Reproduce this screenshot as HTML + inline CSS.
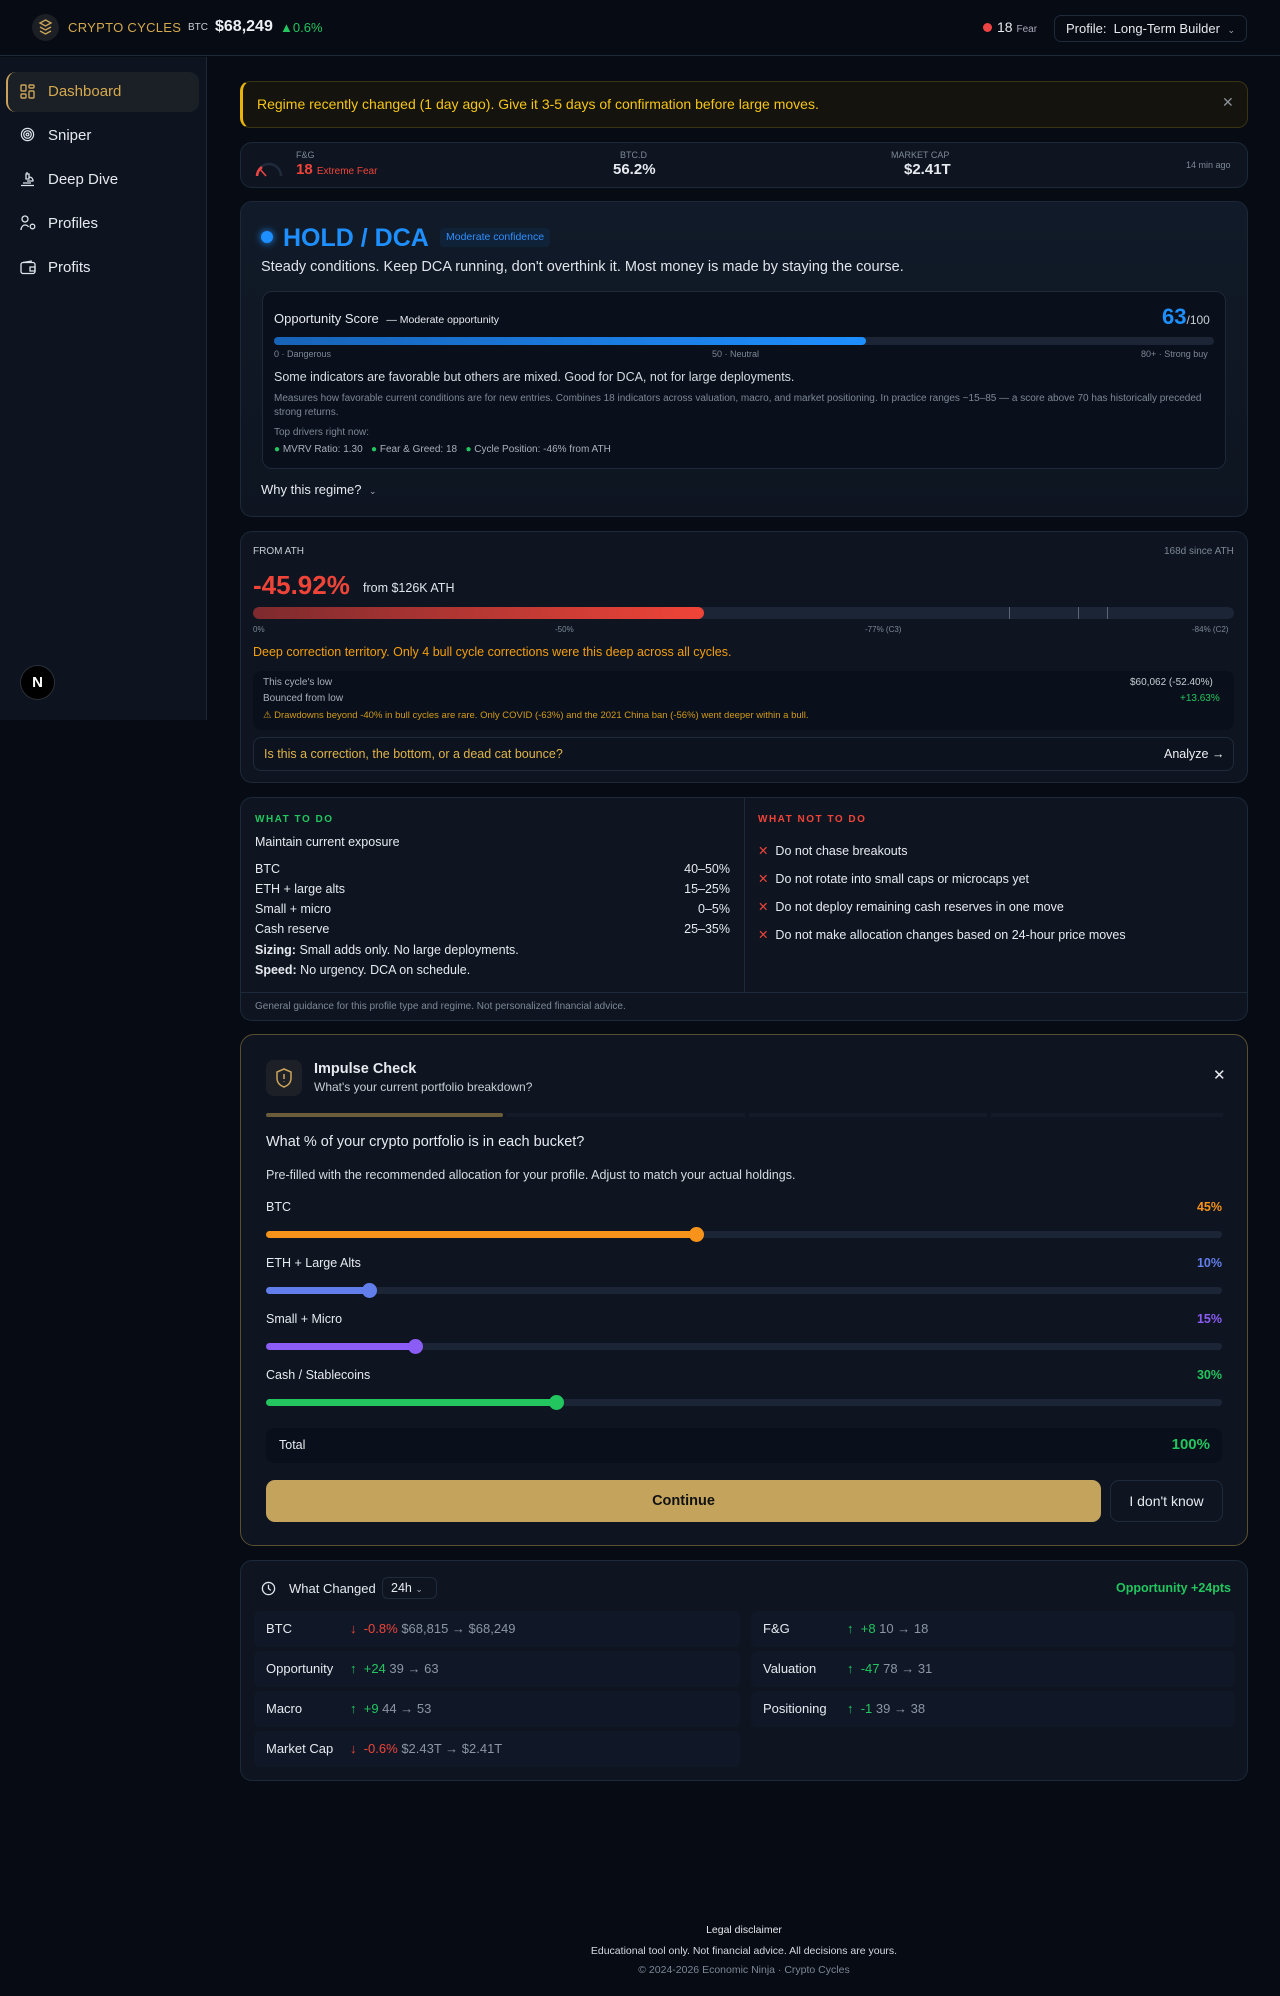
<!DOCTYPE html>
<html><head><meta charset="utf-8"><style>
*{box-sizing:border-box;margin:0;padding:0}
body{width:1280px;height:1996px;background:#060b14;font-family:"Liberation Sans",sans-serif;color:#e6e9ee;position:relative;overflow:hidden;font-size:14px}
.abs{position:absolute}
.card{position:absolute;left:240px;width:1008px;background:#0e1521;border:1px solid #1d2838;border-radius:12px}
.muted{color:#7d8796}
.green{color:#22c55e}
.red{color:#f04438}
.slider{position:absolute;left:26px;width:956px;height:7px;border-radius:4px;background:#1b2535}
.slider i{position:absolute;left:0;top:0;height:7px;border-radius:4px}
.slider b{position:absolute;top:-4px;width:15px;height:15px;border-radius:50%;margin-left:-7px}
.row{position:absolute;height:36px;background:#101828;border-radius:6px;font-size:13px;line-height:36px}
.row span{position:absolute}
</style></head><body>
<!-- header -->
<div class="abs" style="left:0;top:0;width:1280px;height:56px;border-bottom:1px solid #1d2838;background:#060b14"></div>
<div class="abs" style="left:32px;top:14px;width:27px;height:27px;border-radius:50%;background:#1c1f24"></div>
<svg class="abs" style="left:38px;top:19px" width="15" height="17" viewBox="0 0 15 17" fill="none" stroke="#c9a45a" stroke-width="1.4"><path d="M7.5 1 L13 4 L7.5 7 L2 4Z M2 8 L7.5 11 L13 8 M2 12 L7.5 15 L13 12"/></svg>
<div class="abs" style="left:68px;top:20px;font-size:13px;color:#d4a94e;letter-spacing:.3px">CRYPTO CYCLES</div>
<div class="abs" style="left:188px;top:22px;font-size:10px;color:#c8ccd3">BTC</div>
<div class="abs" style="left:215px;top:18px;font-size:16px;color:#eef0f3;font-weight:bold">$68,249</div>
<div class="abs" style="left:280px;top:20px;font-size:13px;color:#22c55e">▲0.6%</div>
<div class="abs" style="left:983px;top:23px;width:9px;height:9px;border-radius:50%;background:#ef4444"></div>
<div class="abs" style="left:997px;top:19px;font-size:14px">18 <span style="font-size:10px;color:#aab">Fear</span></div>
<div class="abs" style="left:1054px;top:15px;width:193px;height:27px;border:1px solid #1f2a3a;border-radius:7px;font-size:13px;line-height:25px;padding-left:11px">Profile:&nbsp; Long-Term Builder <span style="font-size:9px;color:#aab;margin-left:4px">⌄</span></div>
<!-- sidebar -->
<div class="abs" style="left:0;top:57px;width:207px;height:663px;background:#0d1420;border-right:1px solid #1d2838"></div>
<div class="abs" style="left:6px;top:72px;width:193px;height:40px;background:#1b1f26;border-radius:10px;border-left:2px solid #c9a45a"></div>
<svg class="abs" style="left:20px;top:84px" width="15" height="15" viewBox="0 0 15 15" fill="none" stroke="#c9a45a" stroke-width="1.4"><rect x="1" y="1" width="5" height="6" rx="1"/><rect x="9" y="1" width="5" height="3" rx="1"/><rect x="9" y="7" width="5" height="7" rx="1"/><rect x="1" y="10" width="5" height="4" rx="1"/></svg>
<div class="abs" style="left:48px;top:83px;font-size:15px;color:#d4a94e">Dashboard</div>
<svg class="abs" style="left:20px;top:127px" width="15" height="15" viewBox="0 0 16 16" fill="none" stroke="#dfe3ea" stroke-width="1.3"><circle cx="8" cy="8" r="6.5"/><circle cx="8" cy="8" r="4"/><circle cx="8" cy="8" r="1.5"/></svg>
<div class="abs" style="left:48px;top:127px;font-size:15px">Sniper</div>
<svg class="abs" style="left:20px;top:171px" width="15" height="16" viewBox="0 0 15 16" fill="none" stroke="#dfe3ea" stroke-width="1.3"><path d="M1 14.5h13M3 12h8M6 3h3v5H6zM7 1v2M9 6c3 0 4 2 4 4H7"/></svg>
<div class="abs" style="left:48px;top:171px;font-size:15px">Deep Dive</div>
<svg class="abs" style="left:20px;top:215px" width="16" height="16" viewBox="0 0 16 16" fill="none" stroke="#dfe3ea" stroke-width="1.3"><circle cx="5" cy="4" r="3"/><path d="M1 15c0-3 2-5 4-5s3 1 3.5 2"/><circle cx="12.5" cy="11.5" r="2.3"/></svg>
<div class="abs" style="left:48px;top:215px;font-size:15px">Profiles</div>
<svg class="abs" style="left:20px;top:260px" width="16" height="15" viewBox="0 0 16 15" fill="none" stroke="#dfe3ea" stroke-width="1.3"><rect x="1" y="2.5" width="14" height="11" rx="2"/><path d="M3 2.5L12 1M10 7h5v4h-5z"/></svg>
<div class="abs" style="left:48px;top:259px;font-size:15px">Profits</div>
<div class="abs" style="left:20px;top:665px;width:35px;height:35px;border-radius:50%;background:#000;border:1px solid #2a2f38;color:#fff;font-weight:bold;font-size:15px;text-align:center;line-height:33px">N</div>

<!-- alert -->
<div class="abs" style="left:240px;top:81px;width:1008px;height:47px;background:#14130d;border:1px solid #3a3414;border-left:3px solid #eab308;border-radius:10px"></div>
<div class="abs" style="left:257px;top:96px;font-size:14px;color:#f5c518">Regime recently changed (1 day ago). Give it 3-5 days of confirmation before large moves.</div>
<div class="abs" style="left:1222px;top:94px;font-size:14px;color:#8a8f98">✕</div>

<!-- stats -->
<div class="card" style="top:142px;height:46px"></div>
<svg class="abs" style="left:254px;top:158px" width="30" height="20" viewBox="0 0 30 20" fill="none" stroke-width="2.5"><path d="M3 18 A12 12 0 0 1 27 18" stroke="#1f2a3a"/><path d="M3 18 A12 12 0 0 1 8 9" stroke="#ef4444"/><path d="M5 10 L12 18" stroke="#ef4444" stroke-width="1.5"/></svg>
<div class="abs muted" style="left:296px;top:150px;font-size:9px">F&amp;G</div>
<div class="abs" style="left:296px;top:161px;font-size:15px;font-weight:bold;color:#f04438">18 <span style="font-size:10px;font-weight:normal">Extreme Fear</span></div>
<div class="abs muted" style="left:620px;top:150px;font-size:9px">BTC.D</div>
<div class="abs" style="left:613px;top:161px;font-size:15px;font-weight:bold">56.2%</div>
<div class="abs muted" style="left:891px;top:150px;font-size:9px">MARKET CAP</div>
<div class="abs" style="left:904px;top:161px;font-size:15px;font-weight:bold">$2.41T</div>
<div class="abs muted" style="left:1186px;top:160px;font-size:9px">14 min ago</div>

<!-- regime card -->
<div class="card" style="top:201px;height:316px;background:linear-gradient(180deg,#111a28,#0e1521)"></div>
<div class="abs" style="left:261px;top:231px;width:12px;height:12px;border-radius:50%;background:#1e8fff;box-shadow:0 0 8px #1e8fff"></div>
<div class="abs" style="left:283px;top:224px;font-size:25px;font-weight:bold;color:#1e8fff">HOLD / DCA</div>
<div class="abs" style="left:440px;top:228px;height:19px;padding:0 6px;background:#0f2238;border-radius:4px;font-size:10.5px;line-height:19px;color:#2f8fff">Moderate confidence</div>
<div class="abs" style="left:261px;top:259px;font-size:14.5px;color:#dfe3ea">Steady conditions. Keep DCA running, don't overthink it. Most money is made by staying the course.</div>
<div class="abs" style="left:262px;top:291px;width:964px;height:178px;background:#0a101b;border:1px solid #1d2838;border-radius:10px"></div>
<div class="abs" style="left:274px;top:311px;font-size:13px">Opportunity Score <span style="font-size:10.5px;margin-left:4px">— Moderate opportunity</span></div>
<div class="abs" style="left:1162px;top:304px;font-size:22px;font-weight:bold;color:#1e8fff">63<span style="font-size:12px;color:#c8ccd3;font-weight:normal">/100</span></div>
<div class="abs" style="left:274px;top:337px;width:940px;height:8px;background:#1b2535;border-radius:4px"><div style="width:63%;height:8px;border-radius:4px;background:linear-gradient(90deg,#1763b8,#1e8fff)"></div></div>
<div class="abs muted" style="left:274px;top:349px;font-size:9px">0 · Dangerous</div>
<div class="abs muted" style="left:712px;top:349px;font-size:9px">50 · Neutral</div>
<div class="abs muted" style="left:1141px;top:349px;font-size:9px">80+ · Strong buy</div>
<div class="abs" style="left:274px;top:370px;font-size:12.5px;color:#d6dae0">Some indicators are favorable but others are mixed. Good for DCA, not for large deployments.</div>
<div class="abs muted" style="left:274px;top:392px;width:935px;font-size:10px;line-height:14px">Measures how favorable current conditions are for new entries. Combines 18 indicators across valuation, macro, and market positioning. In practice ranges ~15–85 — a score above 70 has historically preceded strong returns.</div>
<div class="abs muted" style="left:274px;top:427px;font-size:10px">Top drivers right now:</div>
<div class="abs" style="left:274px;top:444px;font-size:10px;color:#a9b0ba"><span class="green">●</span> MVRV Ratio: 1.30 &nbsp;&nbsp;<span class="green">●</span> Fear &amp; Greed: 18 &nbsp;&nbsp;<span class="green">●</span> Cycle Position: -46% from ATH</div>
<div class="abs" style="left:261px;top:482px;font-size:13px">Why this regime? <span style="font-size:9px;color:#aab;margin-left:4px">⌄</span></div>

<!-- from ATH -->
<div class="card" style="top:531px;height:252px"></div>
<div class="abs" style="left:253px;top:546px;font-size:10px;color:#c8ccd3">FROM ATH</div>
<div class="abs muted" style="left:1164px;top:546px;font-size:10px">168d since ATH</div>
<div class="abs" style="left:253px;top:570px;font-size:26px;font-weight:bold;color:#f04438">-45.92%</div>
<div class="abs" style="left:363px;top:581px;font-size:12.5px;color:#dfe3ea">from $126K ATH</div>
<div class="abs" style="left:253px;top:607px;width:981px;height:12px;background:#1b2535;border-radius:6px;overflow:hidden"><div style="width:46%;height:12px;background:linear-gradient(90deg,#7d2a2e,#f04438);border-radius:6px"></div></div>
<div class="abs" style="left:1009px;top:607px;width:1px;height:12px;background:#5a6575"></div>
<div class="abs" style="left:1078px;top:607px;width:1px;height:12px;background:#5a6575"></div>
<div class="abs" style="left:1107px;top:607px;width:1px;height:12px;background:#5a6575"></div>
<div class="abs muted" style="left:253px;top:625px;font-size:8px">0%</div>
<div class="abs muted" style="left:555px;top:625px;font-size:8px">-50%</div>
<div class="abs muted" style="left:865px;top:625px;font-size:8px">-77% (C3)</div>
<div class="abs muted" style="left:1192px;top:625px;font-size:8px">-84% (C2)</div>
<div class="abs" style="left:253px;top:645px;font-size:12.5px;color:#f59e0b">Deep correction territory. Only 4 bull cycle corrections were this deep across all cycles.</div>
<div class="abs" style="left:253px;top:671px;width:981px;height:59px;background:#0a101b;border-radius:8px"></div>
<div class="abs muted" style="left:263px;top:677px;font-size:10px;color:#a9b0ba">This cycle's low</div>
<div class="abs" style="left:1130px;top:677px;font-size:10px;color:#c8ccd3">$60,062 (-52.40%)</div>
<div class="abs" style="left:263px;top:693px;font-size:10px;color:#a9b0ba">Bounced from low</div>
<div class="abs green" style="left:1180px;top:693px;font-size:10px">+13.63%</div>
<div class="abs" style="left:263px;top:710px;font-size:9.5px;color:#d19a1a">⚠ Drawdowns beyond -40% in bull cycles are rare. Only COVID (-63%) and the 2021 China ban (-56%) went deeper within a bull.</div>
<div class="abs" style="left:253px;top:737px;width:981px;height:34px;border:1px solid #1f2a3a;border-radius:8px;background:#0c131e"></div>
<div class="abs" style="left:264px;top:747px;font-size:12.5px;color:#e0b34a">Is this a correction, the bottom, or a dead cat bounce?</div>
<div class="abs" style="left:1164px;top:747px;font-size:12.5px;color:#eef0f3">Analyze →</div>

<!-- what to do -->
<div class="card" style="top:797px;height:224px"></div>
<div class="abs" style="left:744px;top:798px;width:1px;height:194px;background:#1d2838"></div>
<div class="abs" style="left:241px;top:992px;width:1006px;height:1px;background:#1d2838"></div>
<div class="abs" style="left:255px;top:814px;font-size:10px;font-weight:bold;color:#22c55e;letter-spacing:1.5px">WHAT TO DO</div>
<div class="abs" style="left:255px;top:835px;font-size:12.5px">Maintain current exposure</div>
<div class="abs" style="left:255px;top:859px;width:475px;font-size:12.5px;line-height:20px"><div style="display:flex;justify-content:space-between"><span>BTC</span><span>40–50%</span></div><div style="display:flex;justify-content:space-between"><span>ETH + large alts</span><span>15–25%</span></div><div style="display:flex;justify-content:space-between"><span>Small + micro</span><span>0–5%</span></div><div style="display:flex;justify-content:space-between"><span>Cash reserve</span><span>25–35%</span></div></div>
<div class="abs" style="left:255px;top:943px;font-size:12.5px"><b>Sizing:</b> Small adds only. No large deployments.</div>
<div class="abs" style="left:255px;top:963px;font-size:12.5px"><b>Speed:</b> No urgency. DCA on schedule.</div>
<div class="abs" style="left:758px;top:814px;font-size:10px;font-weight:bold;color:#f04438;letter-spacing:1.5px">WHAT NOT TO DO</div>
<div class="abs" style="left:758px;top:837px;font-size:12.5px;line-height:28px"><div><span class="red">✕</span>&nbsp; Do not chase breakouts</div><div><span class="red">✕</span>&nbsp; Do not rotate into small caps or microcaps yet</div><div><span class="red">✕</span>&nbsp; Do not deploy remaining cash reserves in one move</div><div><span class="red">✕</span>&nbsp; Do not make allocation changes based on 24-hour price moves</div></div>
<div class="abs muted" style="left:255px;top:1001px;font-size:10px">General guidance for this profile type and regime. Not personalized financial advice.</div>

<!-- impulse check -->
<div class="card" style="top:1034px;height:512px;border:1.5px solid #5a4e30;border-radius:14px">
 <div class="abs" style="left:25px;top:25px;width:36px;height:36px;border-radius:8px;background:#1d2127"></div>
 <svg class="abs" style="left:34px;top:33px" width="18" height="20" viewBox="0 0 18 20" fill="none" stroke="#c9a45a" stroke-width="1.5"><path d="M9 1L16 4v6c0 4.5-3 7.5-7 9C5 17.5 2 14.5 2 10V4z"/><path d="M9 6v5M9 13.5v.5"/></svg>
 <div class="abs" style="left:73px;top:26px;font-size:14.5px;font-weight:bold">Impulse Check</div>
 <div class="abs" style="left:73px;top:45px;font-size:12px;color:#c8ccd3">What's your current portfolio breakdown?</div>
 <div class="abs" style="left:972px;top:31px;font-size:15px">✕</div>
 <div class="abs" style="left:25px;top:78px;width:237px;height:4px;background:#6b5d3a;border-radius:2px"></div>
 <div class="abs" style="left:266px;top:78px;width:238px;height:4px;background:#131b28"></div>
 <div class="abs" style="left:508px;top:78px;width:238px;height:4px;background:#131b28"></div>
 <div class="abs" style="left:750px;top:78px;width:232px;height:4px;background:#131b28"></div>
 <div class="abs" style="left:25px;top:99px;font-size:14.5px">What % of your crypto portfolio is in each bucket?</div>
 <div class="abs" style="left:25px;top:133px;font-size:12.5px;color:#d6dae0">Pre-filled with the recommended allocation for your profile. Adjust to match your actual holdings.</div>
 <div class="abs" style="left:25px;top:165px;font-size:12.5px">BTC</div><div class="abs" style="right:25px;top:165px;font-size:12.5px;font-weight:bold;color:#f7931a">45%</div>
 <div class="slider" style="top:196px;left:25px;width:956px"><i style="width:430px;background:#f7931a"></i><b style="left:430px;background:#f7931a"></b></div>
 <div class="abs" style="left:25px;top:221px;font-size:12.5px">ETH + Large Alts</div><div class="abs" style="right:25px;top:221px;font-size:12.5px;font-weight:bold;color:#627eea">10%</div>
 <div class="slider" style="top:252px;left:25px;width:956px"><i style="width:103px;background:#627eea"></i><b style="left:103px;background:#627eea"></b></div>
 <div class="abs" style="left:25px;top:277px;font-size:12.5px">Small + Micro</div><div class="abs" style="right:25px;top:277px;font-size:12.5px;font-weight:bold;color:#8b5cf6">15%</div>
 <div class="slider" style="top:308px;left:25px;width:956px"><i style="width:149px;background:#8b5cf6"></i><b style="left:149px;background:#8b5cf6"></b></div>
 <div class="abs" style="left:25px;top:333px;font-size:12.5px">Cash / Stablecoins</div><div class="abs" style="right:25px;top:333px;font-size:12.5px;font-weight:bold;color:#22c55e">30%</div>
 <div class="slider" style="top:364px;left:25px;width:956px"><i style="width:290px;background:#22c55e"></i><b style="left:290px;background:#22c55e"></b></div>
 <div class="abs" style="left:25px;top:393px;width:956px;height:35px;background:#0a101b;border-radius:8px"></div>
 <div class="abs" style="left:38px;top:403px;font-size:12.5px">Total</div>
 <div class="abs" style="right:37px;top:401px;font-size:15px;font-weight:bold;color:#22c55e">100%</div>
 <div class="abs" style="left:25px;top:445px;width:835px;height:42px;background:#c4a45c;border-radius:9px;color:#111;font-size:14.5px;font-weight:bold;text-align:center;line-height:42px">Continue</div>
 <div class="abs" style="left:869px;top:445px;width:113px;height:42px;border:1px solid #1f2a3a;border-radius:9px;font-size:14px;text-align:center;line-height:40px">I don't know</div>
</div>

<!-- what changed -->
<div class="card" style="top:1560px;height:221px">
 <svg class="abs" style="left:20px;top:20px" width="15" height="15" viewBox="0 0 16 16" fill="none" stroke="#dfe3ea" stroke-width="1.4"><circle cx="8" cy="8" r="6.5"/><path d="M8 4v4l2.5 2"/></svg>
 <div class="abs" style="left:48px;top:20px;font-size:13px">What Changed</div>
 <div class="abs" style="left:141px;top:16px;width:55px;height:22px;border:1px solid #1f2a3a;border-radius:6px;font-size:12.5px;line-height:20px;padding-left:8px">24h <span style="font-size:9px;color:#aab">⌄</span></div>
 <div class="abs green" style="right:16px;top:20px;font-size:12.5px;font-weight:bold">Opportunity +24pts</div>
 <div class="row" style="left:13px;top:50px;width:486px"><span style="left:12px">BTC</span><span style="left:96px"><span class="red" style="position:static">↓ &nbsp;-0.8%</span> <span class="muted" style="position:static;color:#8c95a2">$68,815 → $68,249</span></span></div>
 <div class="row" style="left:13px;top:90px;width:486px"><span style="left:12px">Opportunity</span><span style="left:96px"><span class="green" style="position:static">↑ &nbsp;+24</span> <span style="position:static;color:#8c95a2">39 → 63</span></span></div>
 <div class="row" style="left:13px;top:130px;width:486px"><span style="left:12px">Macro</span><span style="left:96px"><span class="green" style="position:static">↑ &nbsp;+9</span> <span style="position:static;color:#8c95a2">44 → 53</span></span></div>
 <div class="row" style="left:13px;top:170px;width:486px"><span style="left:12px">Market Cap</span><span style="left:96px"><span class="red" style="position:static">↓ &nbsp;-0.6%</span> <span style="position:static;color:#8c95a2">$2.43T → $2.41T</span></span></div>
 <div class="row" style="left:510px;top:50px;width:484px"><span style="left:12px">F&amp;G</span><span style="left:96px"><span class="green" style="position:static">↑ &nbsp;+8</span> <span style="position:static;color:#8c95a2">10 → 18</span></span></div>
 <div class="row" style="left:510px;top:90px;width:484px"><span style="left:12px">Valuation</span><span style="left:96px"><span class="green" style="position:static">↑ &nbsp;-47</span> <span style="position:static;color:#8c95a2">78 → 31</span></span></div>
 <div class="row" style="left:510px;top:130px;width:484px"><span style="left:12px">Positioning</span><span style="left:96px"><span class="green" style="position:static">↑ &nbsp;-1</span> <span style="position:static;color:#8c95a2">39 → 38</span></span></div>
</div>

<!-- footer -->
<div class="abs" style="left:240px;width:1008px;top:1924px;text-align:center;font-size:10.5px">Legal disclaimer</div>
<div class="abs" style="left:240px;width:1008px;top:1945px;text-align:center;font-size:10.5px;color:#d6dae0">Educational tool only. Not financial advice. All decisions are yours.</div>
<div class="abs muted" style="left:240px;width:1008px;top:1964px;text-align:center;font-size:10.5px">© 2024-2026 Economic Ninja · Crypto Cycles</div>
</body></html>
